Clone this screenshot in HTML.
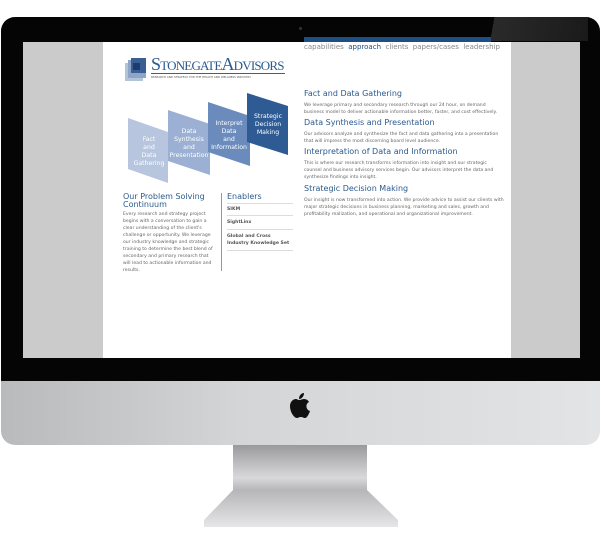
<!DOCTYPE html><html><head><style>
body{margin:0;width:601px;height:539px;background:#fff;position:relative;overflow:hidden;font-family:"DejaVu Sans","Liberation Sans",sans-serif}
.a{position:absolute}
.h{color:#2a5a8f;font-size:8px}
.p{color:#666;font-size:4.6px;line-height:7px}
</style></head><body>
<div class="a" style="left:1px;top:17px;width:599px;height:428px;border-radius:14px;background:linear-gradient(90deg,#b9babc,#d4d5d7 40%,#e3e4e6)"></div>
<div class="a" style="left:1px;top:17px;width:599px;height:364px;border-radius:14px 14px 0 0;background:#050505"></div>
<div class="a" style="left:470px;top:17px;width:118px;height:24px;background:linear-gradient(100deg,transparent 20%,#2a2a2a 20%,#1a1a1a)"></div>
<div class="a" style="left:299px;top:27px;width:3px;height:3px;border-radius:50%;background:#333"></div>
<div class="a" style="left:23px;top:42px;width:557px;height:316px;background:#cbcbcb"></div>
<div class="a" style="left:103px;top:42px;width:408px;height:316px;background:#fff"></div>
<div class="a" style="left:304px;top:37px;width:187px;height:5px;background:#1d4f85"></div>
<div class="a" style="left:304px;top:43px;font-size:7px;color:#888;white-space:nowrap">capabilities&nbsp; <span style="color:#1d4f85">approach</span>&nbsp; clients&nbsp; papers/cases&nbsp; leadership</div>
<svg class="a" style="left:122px;top:55px" width="30" height="30"><rect x="3" y="8" width="18" height="18" fill="#b4c3dc"/><rect x="6" y="5" width="18" height="18" fill="#8ea5c9"/><rect x="9" y="3" width="15" height="15" fill="#3a5f94"/><rect x="11" y="8" width="7" height="7" fill="#1b3d6e"/></svg>
<div class="a" style="left:151px;top:54px;font-family:'Liberation Serif',serif;color:#2a5a8f;font-size:18px;letter-spacing:-0.8px;white-space:nowrap">S<span style="font-size:13px">TONEGATE</span>A<span style="font-size:13px">DVISORS</span></div>
<div class="a" style="left:151px;top:73px;width:134px;border-top:1px solid #3a5f94;font-size:2.8px;color:#555;padding-top:1px;white-space:nowrap">RESEARCH AND STRATEGY FOR THE HEALTH AND WELLNESS INDUSTRY</div>
<svg class="a" style="left:0;top:0" width="601" height="200">
<polygon points="128,118 168,132 168,183 128,169" fill="#b7c5de"/>
<polygon points="168,110 210,124 210,175 168,161" fill="#9bb0d3"/>
<polygon points="208,102 250,116 250,166 208,152" fill="#6c8bbd"/>
<polygon points="247,93 288,106 288,155 247,142" fill="#2e5b93"/>
<g fill="#fff" font-size="6.2" text-anchor="middle" font-family="DejaVu Sans,sans-serif"><text x="149" y="141">Fact</text><text x="149" y="149">and</text><text x="149" y="157">Data</text><text x="149" y="165">Gathering</text>
<text x="189" y="133">Data</text><text x="189" y="141">Synthesis</text><text x="189" y="149">and</text><text x="189" y="157">Presentation</text>
<text x="229" y="125">Interpret</text><text x="229" y="133">Data</text><text x="229" y="141">and</text><text x="229" y="149">Information</text>
<text x="268" y="118">Strategic</text><text x="268" y="126">Decision</text><text x="268" y="134">Making</text></g></svg>
<div class="a h" style="left:123px;top:193px;line-height:8px;width:90px">Our Problem Solving Continuum</div>
<div class="a p" style="left:123px;top:211px;width:92px">Every research and strategy project begins with a conversation to gain a clear understanding of the client's challenge or opportunity. We leverage our industry knowledge and strategic training to determine the best blend of secondary and primary research that will lead to actionable information and results.</div>
<div class="a" style="left:221px;top:193px;width:1px;height:78px;background:#7d9cc1"></div>
<div class="a h" style="left:227px;top:192px">Enablers</div>
<div class="a p" style="left:227px;top:203px;width:66px;color:#555;font-weight:bold">
<div style="border-top:1px solid #ddd;padding:2px 0">SIKM</div><div style="border-top:1px solid #ddd;padding:3px 0">SightLinx</div><div style="border-top:1px solid #ddd;border-bottom:1px solid #ddd;padding:3px 0">Global and Cross Industry Knowledge Set</div></div>
<div class="a" style="left:304px;top:89px;width:200px">
<div class="h" style="margin-bottom:4px">Fact and Data Gathering</div><div class="p">We leverage primary and secondary research through our 24 hour, on demand business model to deliver actionable information better, faster, and cost effectively.</div>
<div class="h" style="margin:2px 0 4px">Data Synthesis and Presentation</div><div class="p">Our advisors analyze and synthesize the fact and data gathering into a presentation that will impress the most discerning board level audience.</div>
<div class="h" style="margin:2px 0 4px">Interpretation of Data and Information</div><div class="p">This is where our research transforms information into insight and our strategic counsel and business advisory services begin. Our advisors interpret the data and synthesize findings into insight.</div>
<div class="h" style="margin:3px 0 4px">Strategic Decision Making</div><div class="p">Our insight is now transformed into action. We provide advice to assist our clients with major strategic decisions in business planning, marketing and sales, growth and profitability realization, and operational and organizational improvement.</div></div>
<svg class="a" style="left:287px;top:392px" width="26" height="30" viewBox="0 0 26 30"><path d="M17 1c0 3-2 6-5 6 0-3 2-6 5-6zM12 8c2 0 3-1 5-1 2 0 4 1 5 3-4 2-3 8 1 9-1 3-3 7-5 7-2 0-2-1-4-1s-3 1-4 1c-3 0-7-6-7-12 0-4 3-7 6-7 1 0 2 1 3 1z" fill="#111"/></svg>
<div class="a" style="left:204px;top:445px;width:194px;height:82px;background:linear-gradient(180deg,#9a9a9c,#d9d9db 40%,#b6b6b8 55%,#e6e6e8);clip-path:polygon(29px 0,163px 0,163px 45px,194px 75px,194px 82px,0 82px,0 75px,29px 45px)"></div>
</body></html>
